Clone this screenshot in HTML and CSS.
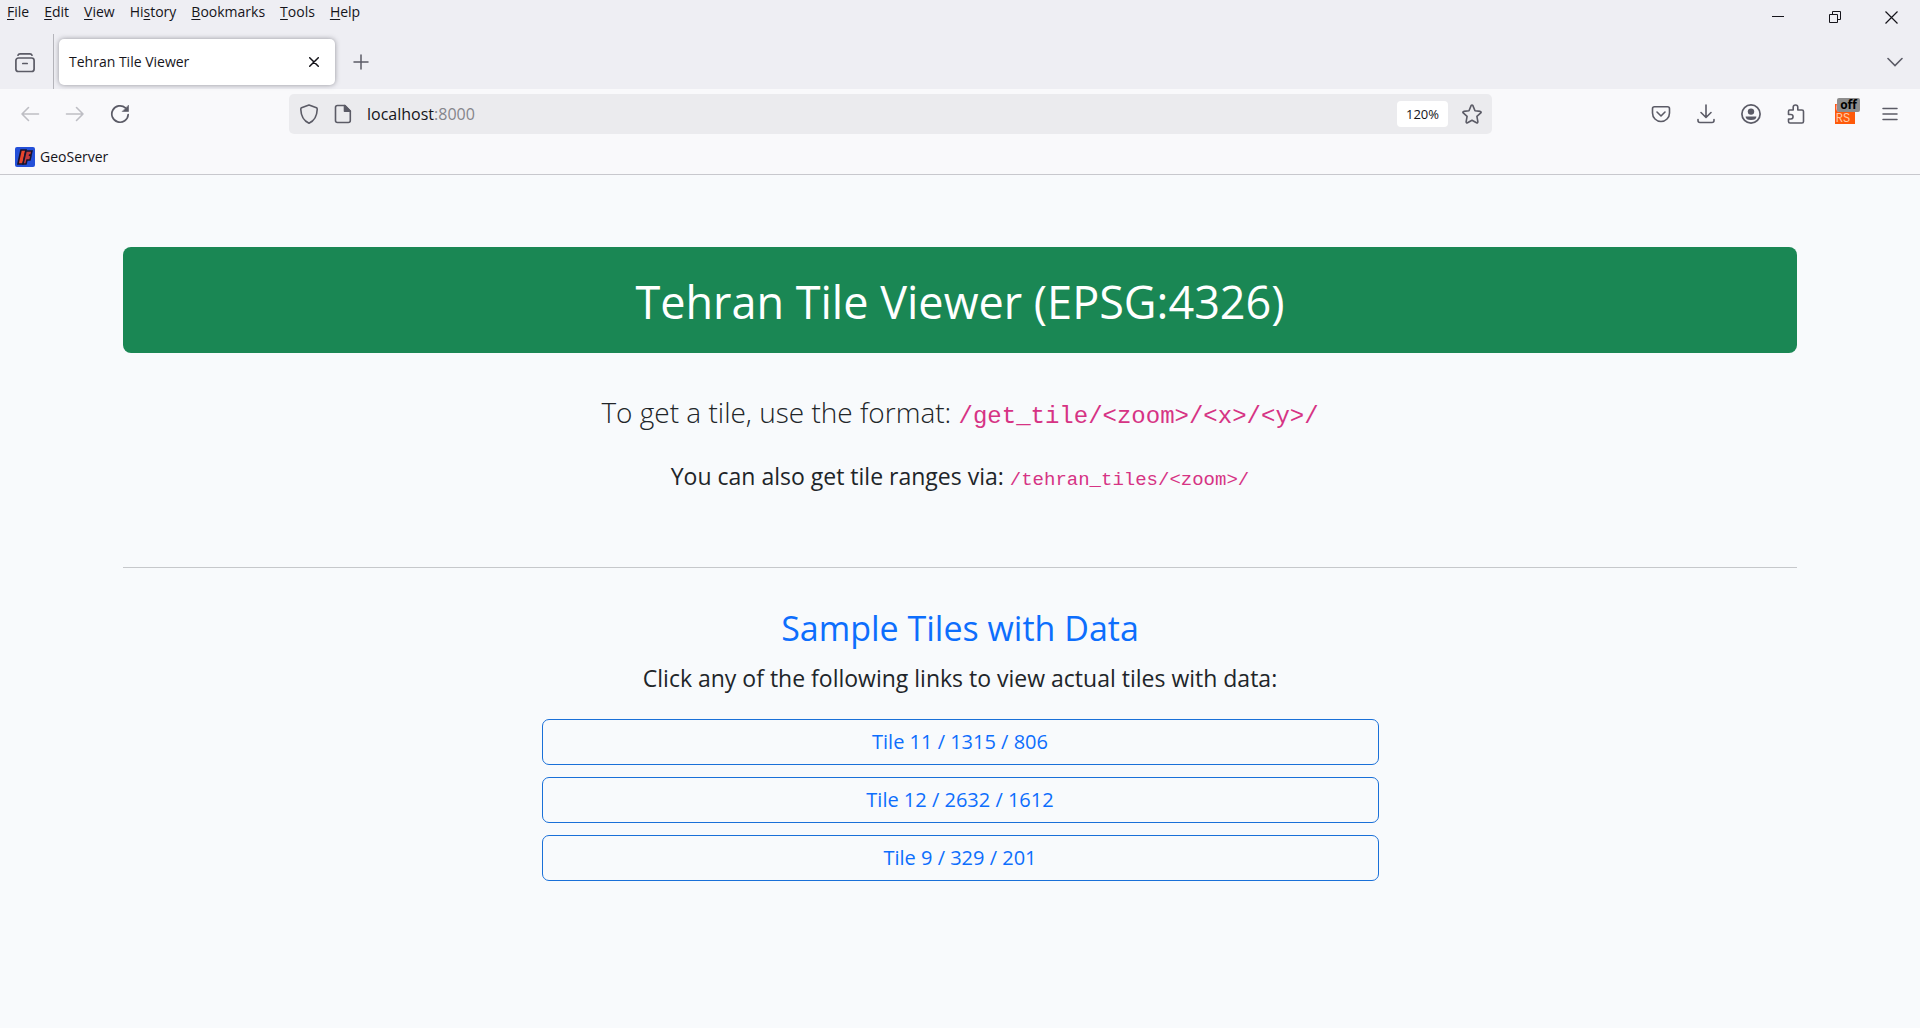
FILE: index.html
```html
<!DOCTYPE html>
<html lang="en">
<head>
<meta charset="utf-8">
<title>Tehran Tile Viewer</title>
<link rel="stylesheet" href="styles.css">
</head>
<body>
<header class="browser">
  <div class="top">
    <div class="menu-row">
      <nav class="menu" aria-label="Menu bar">
        <button><u>F</u>ile</button><button><u>E</u>dit</button><button><u>V</u>iew</button><button>Hi<u>s</u>tory</button><button><u>B</u>ookmarks</button><button><u>T</u>ools</button><button><u>H</u>elp</button>
      </nav>
      <div class="window-controls">
        <button aria-label="Minimize"><svg width="12" height="12" viewBox="0 0 12 12"><path d="M0 5.5h12" stroke="#15141a"/></svg></button>
        <button aria-label="Restore"><svg width="12" height="12" viewBox="0 0 12 12" fill="none" stroke="#15141a"><path d="M.5 3.5h8v8h-8zM3.5 3.5v-3h8v8h-3"/></svg></button>
        <button aria-label="Close window"><svg width="13" height="13" viewBox="0 0 13 13"><path d="M.5.5l12 12M12.500.5l-12 12" stroke="#15141a" stroke-width="1.2"/></svg></button>
      </div>
    </div>
    <div class="tab-row">
      <button class="recent" aria-label="Recent browsing"><svg width="20" height="20" viewBox="0 0 20 20" fill="none" stroke="#5b5b66" stroke-width="1.7" stroke-linecap="round"><path d="M3 2.200Q3.500.9 5 .9h10q1.500 0 2 1.300"/><rect x=".9" y="5" width="18.200" height="13.500" rx="2.500"/><path d="M7.800 10.500h4.400"/></svg></button>
      <div class="tab"><span>Tehran Tile Viewer</span><button aria-label="Close tab"><svg width="10" height="10" viewBox="0 0 10 10"><path d="M.7.7l8.600 8.600M9.300.7L.7 9.300" stroke="#15141a" stroke-width="1.500" stroke-linecap="round"/></svg></button></div>
      <button class="new-tab" aria-label="New tab"><svg width="16" height="16" viewBox="0 0 16 16"><path d="M8 1v14M1 8h14" stroke="#5b5b66" stroke-width="1.500" stroke-linecap="round"/></svg></button>
      <button class="all-tabs" aria-label="List all tabs"><svg width="16" height="10" viewBox="0 0 16 10" fill="none" stroke="#5b5b66" stroke-width="1.600" stroke-linecap="round"><path d="M1 1.500l7 7 7-7"/></svg></button>
    </div>
  </div>
  <div class="nav-row">
    <div class="history">
      <button aria-label="Back" disabled><svg width="20" height="20" viewBox="0 0 20 20" fill="none" stroke="#bebec4" stroke-width="1.600" stroke-linecap="round" stroke-linejoin="round"><path d="M18.500 10H2M8.500 3.500L2 10l6.500 6.500"/></svg></button>
      <button aria-label="Forward" disabled><svg width="20" height="20" viewBox="0 0 20 20" fill="none" stroke="#bebec4" stroke-width="1.600" stroke-linecap="round" stroke-linejoin="round"><path d="M1.500 10H18M11.500 3.500L18 10l-6.500 6.500"/></svg></button>
      <button aria-label="Reload"><svg width="20" height="20" viewBox="0 0 20 20" fill="none" stroke="#5b5b66" stroke-width="1.700" stroke-linecap="round"><path d="M18.200 10.500A8.200 8.200 0 1 1 15.500 3.900"/><path d="M18.500 1.500v6h-6z" fill="#5b5b66" stroke-width=".6" stroke-linejoin="round"/></svg></button>
    </div>
    <div class="url">
      <svg width="20" height="20" viewBox="0 0 20 20" fill="none" stroke="#5b5b66" stroke-width="1.600" stroke-linejoin="round"><path d="M10 1L17.500 3.800Q18.300 4.200 18.200 5.500C18 11.500 16 16.500 10 19.200 4 16.500 2 11.500 1.800 5.500 1.700 4.200 2.500 3.800 2.500 3.800Z"/></svg>
      <svg width="20" height="20" viewBox="0 0 20 20" fill="none" stroke="#5b5b66" stroke-width="1.600" stroke-linejoin="round"><path d="M4.500 1.500H12L17.300 7v9.500q0 2-2 2H4.500q-2 0-2-2v-13q0-2 2-2z"/><path d="M11.500 1.500V7.200h5.800z" fill="#5b5b66"/></svg>
      <span class="address">localhost<span>:8000</span></span>
      <button class="zoom">120%</button>
      <button aria-label="Bookmark this page"><svg width="20" height="20" viewBox="0 0 20 20" fill="none" stroke="#5b5b66" stroke-width="1.600" stroke-linejoin="round"><path d="M9.100 1.600q.9-1.200 1.800 0L13 6.800l5.300.6q1.400.4.5 1.500L14.900 12.400l1 5.400q-.1 1.400-1.400.9L10 16.200l-4.500 2.500q-1.300.5-1.400-.9l1-5.400L1.200 8.900Q.3 7.800 1.700 7.400L7 6.800z"/></svg></button>
    </div>
    <div class="tools">
      <button aria-label="Save to Pocket"><svg width="20" height="20" viewBox="0 0 20 20" fill="none" stroke="#5b5b66" stroke-width="1.600" stroke-linecap="round" stroke-linejoin="round"><path d="M3.500 2.800h13q2 0 2 2V9a8.500 8.500 0 0 1-17 0V4.800q0-2 2-2z"/><path d="M6 8l4 4 4-4"/></svg></button>
      <button aria-label="Downloads"><svg width="20" height="20" viewBox="0 0 20 20" fill="none" stroke="#5b5b66" stroke-width="1.600" stroke-linecap="round" stroke-linejoin="round"><path d="M10 1v12M5 8.500l5 5 5-5M2 15.500v1q0 2 2 2h12q2 0 2-2v-1"/></svg></button>
      <button aria-label="Account"><svg width="20" height="20" viewBox="0 0 20 20" fill="#5b5b66"><circle cx="10" cy="10" r="9.100" fill="none" stroke="#5b5b66" stroke-width="1.700"/><circle cx="10" cy="7.600" r="3.200"/><path d="M4.600 12.500h10.800q0 3.500-5.400 3.500t-5.400-3.500z"/></svg></button>
      <button aria-label="Extensions"><svg width="20" height="20" viewBox="0 0 20 20" fill="none" stroke="#5b5b66" stroke-width="1.600" stroke-linejoin="round"><path d="M3.500 6h3.700V3.300a2.300 2.300 0 0 1 4.600 0V6H16q1.500 0 1.500 1.500v10q0 1.500-1.500 1.500H4q-1.500 0-1.500-1.500V15h2.300a2.200 2.200 0 0 0 0-4.500H2.500V7.500Q2.500 6 3.500 6z"/></svg></button>
      <button class="cors" aria-label="CORS, off"><span class="cors-icon">CO<br>RS</span><span class="badge">off</span></button>
      <button aria-label="Application menu"><svg width="20" height="20" viewBox="0 0 20 20" stroke="#5b5b66" stroke-width="1.500" stroke-linecap="round"><path d="M3 4.500h14M3 10h14M3 15.500h14"/></svg></button>
    </div>
  </div>
  <div class="bookmarks">
    <a href="#"><svg width="20" height="20" viewBox="0 0 20 20"><rect width="20" height="20" rx="2" fill="#2450d8"/><path d="M6 3h5L8 17H3l1-5z" fill="#e8452b" stroke="#17132e" stroke-width="1.600"/><path d="M11 4h6l-1 4h-2l2 1-1 4h-3l-1 4H8z" fill="#c43a3c" stroke="#17132e" stroke-width="1.500"/></svg>GeoServer</a>
  </div>
</header>
<main class="page">
  <h1>Tehran Tile Viewer (EPSG:4326)</h1>
  <p class="lead">To get a tile, use the format: <code>/get_tile/&lt;zoom&gt;/&lt;x&gt;/&lt;y&gt;/</code></p>
  <p class="ranges">You can also get tile ranges via: <code>/tehran_tiles/&lt;zoom&gt;/</code></p>
  <hr>
  <h2>Sample Tiles with Data</h2>
  <p class="hint">Click any of the following links to view actual tiles with data:</p>
  <div class="tiles">
    <a href="#">Tile 11 / 1315 / 806</a>
    <a href="#">Tile 12 / 2632 / 1612</a>
    <a href="#">Tile 9 / 329 / 201</a>
  </div>
</main>
</body>
</html>
```
FILE: styles.css
```css
* { box-sizing: border-box; }
body {
  margin: 0;
  min-height: 100vh;
  background: #f8fafc;
  color: #212529;
  font-family: "Open Sans", "Noto Sans", sans-serif;
}
button {
  display: flex;
  align-items: center;
  justify-content: center;
  margin: 0;
  padding: 0;
  border: 0;
  background: none;
  color: inherit;
  font: inherit;
}
svg { display: block; flex: none; }

.browser {
  background: #f9f9fb;
  border-bottom: 1px solid #c8c8cd;
  color: #15141a;
  font-size: 14px;
}
.top { background: #eeeef3; }
.menu-row { display: flex; justify-content: space-between; height: 34px; }
.menu { display: flex; gap: 15px; padding-left: 7px; height: 24px; }
.menu button { display: block; line-height: 24px; }
.menu u { text-underline-offset: 2px; }
.window-controls { display: flex; }
.window-controls button { width: 57px; }

.tab-row { display: flex; align-items: center; height: 55px; }
.recent { width: 54px; height: 55px; padding: 2px 4px 0 0; border-right: 1px solid #b4b4ba; }
.tab {
  display: flex;
  align-items: center;
  justify-content: space-between;
  width: 276px;
  height: 46px;
  margin-left: 5px;
  padding: 0 16px 0 10px;
  border-radius: 5px;
  background: #fff;
  box-shadow: 0 0 5px rgba(60, 60, 70, .5);
}
.new-tab { margin-left: 18px; }
.all-tabs { margin: 0 17px 0 auto; }

.nav-row { display: flex; align-items: center; height: 50px; }
.history { display: flex; gap: 25px; width: 289px; padding-left: 20px; }
.url {
  display: flex;
  align-items: center;
  flex: 0 1 1203px;
  height: 40px;
  padding: 0 10px;
  gap: 14px;
  border-radius: 5px;
  background: #ebebee;
}
.address { flex: 1; font-size: 16px; }
.address span { color: #85858b; }
.zoom { width: 51px; height: 26px; border-radius: 4px; background: #fff; font-size: 13px; }
.tools { display: flex; gap: 25px; margin-left: auto; padding-right: 20px; }
.cors { position: relative; margin-left: 4px; }
.cors-icon {
  width: 20px;
  height: 20px;
  padding-right: 4px;
  background: #ff5a0a;
  color: #ffc9a5;
  font: 12px/10px "Liberation Mono", monospace;
}
.badge {
  position: absolute;
  top: -6px;
  left: 2px;
  width: 23px;
  border-radius: 2px;
  background: #8d8d8d;
  color: #000;
  font-size: 12px;
  font-weight: 700;
  line-height: 14px;
}
.bookmarks { display: flex; height: 35px; padding-left: 15px; }
.bookmarks a { display: flex; align-items: center; gap: 5px; height: 35px; color: inherit; text-decoration: none; }

.page { max-width: 1722px; margin: 0 auto; padding: 72px 24px; text-align: center; }
h1 {
  margin: 0;
  padding: 26px 24px 22px;
  border-radius: 8px;
  background: #1a8754;
  color: #fff;
  font-size: 45px;
  font-weight: 400;
  line-height: 58px;
}
p { margin: 0; }
code { color: #d63384; font-family: "Liberation Mono", monospace; line-height: 1; }
.lead { margin-top: 37px; font-size: 28px; font-weight: 300; line-height: 44px; }
.lead code { font-size: 24px; font-weight: 400; }
.ranges { margin-top: 24px; font-size: 23px; line-height: 36px; }
.ranges code { font-size: 19px; }
hr { margin: 73px 0 0; border: 0; border-top: 1px solid #c6c8cb; }
h2 { margin: 37px 0 0; color: #0d6efd; font-size: 34px; font-weight: 400; line-height: 46px; }
.hint { margin-top: 9px; font-size: 23px; line-height: 36px; }
.tiles { display: grid; gap: 12px; width: 50%; margin: 23px auto 0; }
.tiles a {
  padding: 7px;
  border: 1px solid #1a70d8;
  border-radius: 7px;
  color: #0d6efd;
  font-size: 20px;
  line-height: 30px;
  text-decoration: none;
}
```
